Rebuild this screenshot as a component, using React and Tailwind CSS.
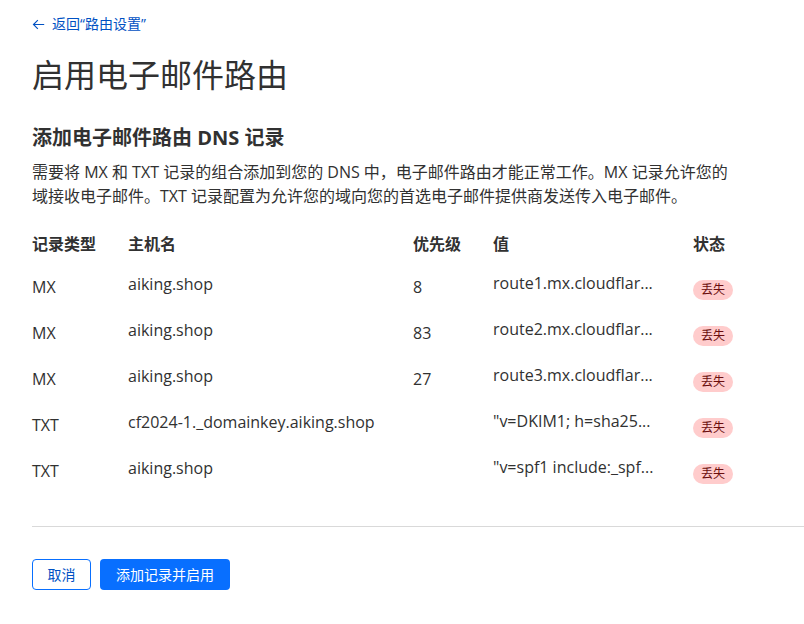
import React from 'react';

const rows = [
    { type: 'MX', host: 'aiking.shop', priority: '8', value: 'route1.mx.cloudflar...' },
    { type: 'MX', host: 'aiking.shop', priority: '83', value: 'route2.mx.cloudflar...' },
    { type: 'MX', host: 'aiking.shop', priority: '27', value: 'route3.mx.cloudflar...' },
    { type: 'TXT', host: 'cf2024-1._domainkey.aiking.shop', priority: '', value: '"v=DKIM1; h=sha25...' },
    { type: 'TXT', host: 'aiking.shop', priority: '', value: '"v=spf1 include:_spf...' },
];

const cols = 'grid grid-cols-[96px_285px_80px_200px_1fr]';

const App = () => {
    return (
        <div
            className="min-h-screen bg-white text-[#313131] pt-[15px] pl-8"
            style={{ fontFamily: '"Open Sans", "Noto Sans CJK SC", sans-serif' }}
        >
            {/* Back link */}
            <a className="flex items-center gap-[7px] text-[14px] leading-[18px] text-[#0051c3]">
                <svg width="13" height="13" viewBox="0 0 16 16" fill="none" stroke="currentColor" strokeWidth="1.4">
                    <path d="M15 8H1.8M7.2 2.6L1.8 8l5.4 5.4" />
                </svg>
                <span>
                    返回<span style={{ fontFamily: '"Open Sans", sans-serif' }}>“</span>路由设置
                    <span style={{ fontFamily: '"Open Sans", sans-serif' }}>”</span>
                </span>
            </a>

            <h1 className="mt-[22px] text-[32px] leading-[40px] font-normal">启用电子邮件路由</h1>

            <h2 className="mt-[30px] text-[20px] leading-[26px] font-bold">添加电子邮件路由 DNS 记录</h2>
            <p className="mt-[9px] text-[16px] leading-6 max-w-[705px]">
                需要将 MX 和 TXT 记录的组合添加到您的 DNS 中，电子邮件路由才能正常工作。MX 记录允许您的域接收电子邮件。TXT 记录配置为允许您的域向您的首选电子邮件提供商发送传入电子邮件。
            </p>

            {/* Records table */}
            <div className="mt-6 text-[16px]">
                <div className={`${cols} h-6 items-center font-bold`}>
                    <div>记录类型</div>
                    <div>主机名</div>
                    <div>优先级</div>
                    <div>值</div>
                    <div>状态</div>
                </div>
                <div className="mt-2">
                    {rows.map((r, i) => (
                        <div key={i} className={`${cols} h-[46px] items-center`}>
                            <div>{r.type}</div>
                            <div className="pb-[6px] whitespace-nowrap">{r.host}</div>
                            <div>{r.priority}</div>
                            <div className="pb-[8px] whitespace-nowrap">{r.value}</div>
                            <div className="pt-[2px]">
                                <span className="inline-flex items-center h-5 px-2 rounded-full bg-[#ffcccc] text-[#6b0d0d] text-[12px]">
                                    丢失
                                </span>
                            </div>
                        </div>
                    ))}
                </div>
            </div>

            <div className="mt-8 border-t border-[#d9d9d9]" />

            {/* Actions */}
            <div className="mt-8 flex gap-[9px]">
                <button className="h-[31px] w-[59px] rounded border border-[#086fff] text-[#0051c3] text-[14px] bg-white">
                    取消
                </button>
                <button className="h-[31px] w-[130px] rounded bg-[#086fff] text-white text-[14px]">
                    添加记录并启用
                </button>
            </div>
        </div>
    );
};

export default App;
